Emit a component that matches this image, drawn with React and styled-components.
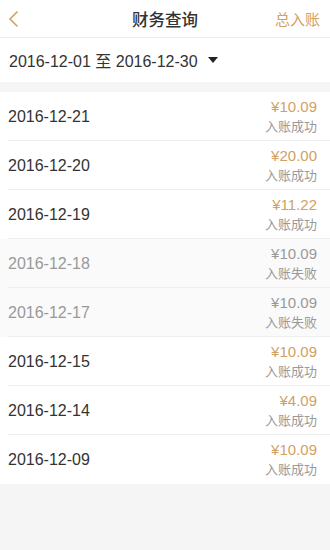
import React from 'react'
import styled, { createGlobalStyle } from 'styled-components'

const Global = createGlobalStyle`
  html, body {
    margin: 0;
    padding: 0;
    background: #f5f5f5;
    font-family: "Liberation Sans", "Noto Sans CJK SC", sans-serif;
  }
`

const Page = styled.div`
  width: 330px;
  min-height: 550px;
  background: #f5f5f5;
`

const Header = styled.div`
  height: 38px;
  background: #fff;
  border-bottom: 1px solid #ececec;
  box-sizing: border-box;
  display: flex;
  align-items: center;
  justify-content: space-between;
  padding: 0 10px 0 8px;
  position: relative;
`

const Title = styled.div`
  position: absolute;
  left: 0;
  right: 0;
  text-align: center;
  font-size: 16.5px;
  font-weight: 500;
  color: #333;
  pointer-events: none;
`

const Back = styled.div`
  width: 14px;
  height: 20px;
  display: flex;
  align-items: center;
`

const HeadLink = styled.div`
  font-size: 15px;
  color: #d3a160;
`

const Filter = styled.div`
  height: 44px;
  background: #fff;
  display: flex;
  align-items: center;
  padding: 0 9px;
  font-size: 16px;
  color: #333;
  gap: 7px;
`

const Caret = styled.span`
  width: 0;
  height: 0;
  border-left: 5px solid transparent;
  border-right: 5px solid transparent;
  border-top: 6px solid #222;
  margin-left: 3px;
`

const List = styled.div`
  margin-top: 10px;
  background: #fff;
`

const Row = styled.div`
  height: 49px;
  box-sizing: border-box;
  display: flex;
  align-items: center;
  justify-content: space-between;
  padding: 0 13px 0 8px;
  background: ${p => (p.$failed ? '#fafafa' : '#fff')};
  position: relative;
  &:not(:last-child)::after {
    content: '';
    position: absolute;
    left: 8px;
    right: 0;
    bottom: 0;
    height: 1px;
    background: #efefef;
  }
`

const Date = styled.div`
  font-size: 16px;
  color: ${p => (p.$failed ? '#999' : '#333')};
`

const Right = styled.div`
  display: flex;
  flex-direction: column;
  align-items: flex-end;
  gap: 1px;
`

const Amount = styled.div`
  font-size: 15px;
  color: ${p => (p.$failed ? '#999' : '#d3a160')};
`

const Status = styled.div`
  font-size: 13px;
  color: #999;
`

const rows = [
  ['2016-12-21', '¥10.09', false],
  ['2016-12-20', '¥20.00', false],
  ['2016-12-19', '¥11.22', false],
  ['2016-12-18', '¥10.09', true],
  ['2016-12-17', '¥10.09', true],
  ['2016-12-15', '¥10.09', false],
  ['2016-12-14', '¥4.09', false],
  ['2016-12-09', '¥10.09', false],
]

export default function App() {
  return (
    <Page>
      <Global />
      <Header>
        <Back>
          <svg width="11" height="18" viewBox="0 0 11 18">
            <path d="M9.5 1.5 L2 9 L9.5 16.5" fill="none" stroke="#d3a160" strokeWidth="1.6" />
          </svg>
        </Back>
        <Title>财务查询</Title>
        <HeadLink>总入账</HeadLink>
      </Header>
      <Filter>
        <span>2016-12-01 至 2016-12-30</span>
        <Caret />
      </Filter>
      <List>
        {rows.map(([d, a, f]) => (
          <Row key={d} $failed={f}>
            <Date $failed={f}>{d}</Date>
            <Right>
              <Amount $failed={f}>{a}</Amount>
              <Status>{f ? '入账失败' : '入账成功'}</Status>
            </Right>
          </Row>
        ))}
      </List>
    </Page>
  )
}
